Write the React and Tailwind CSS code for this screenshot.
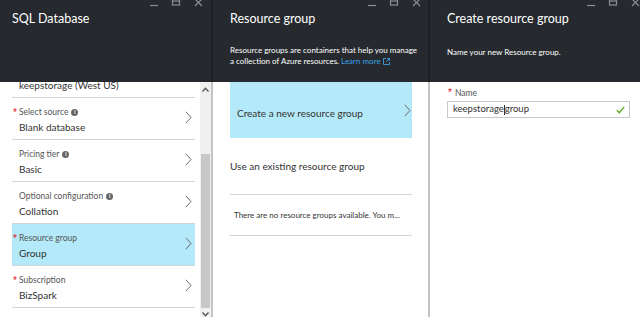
import React from 'react';

const FONT = { fontFamily: 'Lato, "Open Sans", Arial, sans-serif' };

const WindowControls = () => (
  <svg width="53" height="8" viewBox="0 0 53 8" className="shrink-0">
    <g stroke="#8b8f93" strokeWidth="1.2" fill="none">
      <line x1="0" y1="5.5" x2="8" y2="5.5" />
      <rect x="22.5" y="-2" width="7" height="7" />
      <line x1="22.5" y1="1" x2="29.5" y2="1" />
      <path d="M45 -1l7 7M52 -1l-7 7" />
    </g>
  </svg>
);

const Chevron = ({ className = '' }) => (
  <svg width="7" height="13" viewBox="0 0 7 13" className={className}>
    <path d="M0.8 0.8L6 6.5L0.8 12.2" stroke="#6b6b6b" strokeWidth="1" fill="none" />
  </svg>
);

const Star = ({ className = '' }) => (
  <span className={`absolute text-[#e81123] text-[10px] leading-none font-['Arial'] ${className}`}>*</span>
);

const BladeHeader = ({ title, controlsPad, children }) => (
  <div className="h-[82px] bg-[#262a2e] flex flex-col shrink-0">
    <div className={`h-[8px] flex justify-end ${controlsPad}`}>
      <WindowControls />
    </div>
    <div className="text-white text-[12.5px] leading-[20px] mt-[1px]">{title}</div>
    {children}
  </div>
);

const Info = () => (
  <span className="inline-flex items-center justify-center w-[7px] h-[7px] rounded-full bg-[#666] text-white text-[5px] font-bold leading-none ml-[3px] align-middle">
    i
  </span>
);

const SettingItem = ({ label, value, required, info, active }) => (
  <div
    className={`relative h-[42px] flex items-center pl-[7px] pr-[3px] border-b border-[#d4d4d4] ${
      active ? 'bg-[#b3e9f8]' : ''
    }`}
  >
    {required && label && <Star className="left-[1px] top-[10px]" />}
    <div className="flex-1 flex flex-col pt-[3px]">
      <div className="text-[8.5px] leading-[12px] text-[#555] h-[12px]">
        {label}
        {info && <Info />}
      </div>
      <div className="text-[10px] leading-[16px] text-[#333] mt-[1px]">{value}</div>
    </div>
    <Chevron className="mt-[-3px]" />
  </div>
);

const items = [
  { label: '', value: 'keepstorage (West US)', required: true },
  { label: 'Select source', value: 'Blank database', required: true, info: true },
  { label: 'Pricing tier', value: 'Basic', info: true },
  { label: 'Optional configuration', value: 'Collation', info: true },
  { label: 'Resource group', value: 'Group', required: true, active: true },
  { label: 'Subscription', value: 'BizSpark', required: true },
];

const Scrollbar = () => (
  <div className="w-[11px] bg-[#f0f0f0] flex flex-col items-center shrink-0">
    <div className="h-[14px] flex items-center justify-center">
      <svg width="7" height="5" viewBox="0 0 7 5">
        <path d="M0.5 4.5L3.5 1.2L6.5 4.5" stroke="#555" strokeWidth="1.3" fill="none" />
      </svg>
    </div>
    <div className="h-[58px]" />
    <div className="w-[9px] flex-1 bg-[#c8c8c8]" />
    <div className="h-[9px] flex items-end justify-center">
      <svg width="7" height="5" viewBox="0 0 7 5">
        <path d="M0.5 0.5L3.5 3.8L6.5 0.5" stroke="#555" strokeWidth="1.3" fill="none" />
      </svg>
    </div>
  </div>
);

export default function App() {
  return (
    <div className="w-[640px] h-[317px] flex overflow-hidden bg-white" style={FONT}>
      {/* SQL Database blade */}
      <div className="w-[213px] flex flex-col shrink-0">
        <div className="bg-[#262a2e] border-r-2 border-[#1d2023] pl-[12px]">
          <BladeHeader title="SQL Database" controlsPad="pr-[8px]" />
        </div>
        <div className="flex-1 flex border-r-2 border-[#c4c4c4] overflow-hidden">
          <div className="flex-1 overflow-hidden pl-[12px] pr-[5px]">
            <div className="-mt-[26px]">
              {items.map((it) => (
                <SettingItem key={it.value} {...it} />
              ))}
            </div>
          </div>
          <Scrollbar />
        </div>
      </div>

      {/* Resource group blade */}
      <div className="w-[217px] flex flex-col shrink-0">
        <div className="bg-[#262a2e] border-r-2 border-[#1d2023] pl-[17px]">
          <BladeHeader title="Resource group" controlsPad="pr-[7px]">
            <div className="text-white text-[8px] leading-[11px] mt-[16px] whitespace-nowrap">
              Resource groups are containers that help you manage
              <br />a collection of Azure resources.{' '}
              <span className="text-[#3aa0e4]">Learn more</span>
              <svg width="7" height="7" viewBox="0 0 7 7" className="inline-block ml-[2px] align-[-1px]">
                <path d="M3 0.5H0.5V6.5H6.5V4M4 0.5H6.5V3M6.5 0.5L3 4" stroke="#3aa0e4" strokeWidth="0.9" fill="none" />
              </svg>
            </div>
          </BladeHeader>
        </div>
        <div className="flex-1 border-r-2 border-[#c4c4c4] pl-[17px] pr-[16px]">
          <div className="h-[56px] bg-[#b3e9f8] flex items-center pl-[7px] pr-[1px]">
            <span className="flex-1 text-[10px] text-[#333] mt-[6px]">Create a new resource group</span>
            <Chevron />
          </div>
          <div className="h-[57px] flex items-center border-b border-[#d4d4d4] text-[10px] text-[#333]">
            Use an existing resource group
          </div>
          <div className="h-[41px] flex items-center pl-[4px] border-b border-[#d4d4d4] text-[8px] text-[#333] whitespace-nowrap">
            There are no resource groups available. You m...
          </div>
        </div>
      </div>

      {/* Create resource group blade */}
      <div className="flex-1 flex flex-col">
        <div className="bg-[#262a2e] pl-[17px]">
          <BladeHeader title="Create resource group" controlsPad="pr-0">
            <div className="text-white text-[8px] leading-[11px] mt-[18px]">Name your new Resource group.</div>
          </BladeHeader>
        </div>
        <div className="flex-1 pl-[17px] pr-[10px] pt-[5px]">
          <div className="text-[8.5px] leading-[13px] text-[#555] pl-[8px] relative">
            <Star className="left-[1px] top-[1px]" />
            Name
          </div>
          <div className="mt-[1px] h-[17px] border border-[#c8c8c8] flex items-center pl-[5px] pr-[4px]">
            <span className="flex-1 text-[9.5px] text-[#333]">
              keepstorage
              <span className="inline-block w-[1px] h-[10px] bg-[#333] align-middle" />
              group
            </span>
            <svg width="9" height="8" viewBox="0 0 9 8">
              <path d="M0.8 4.2L3.3 6.7L8.2 0.8" stroke="#5ea91c" strokeWidth="1.3" fill="none" />
            </svg>
          </div>
        </div>
      </div>
    </div>
  );
}
